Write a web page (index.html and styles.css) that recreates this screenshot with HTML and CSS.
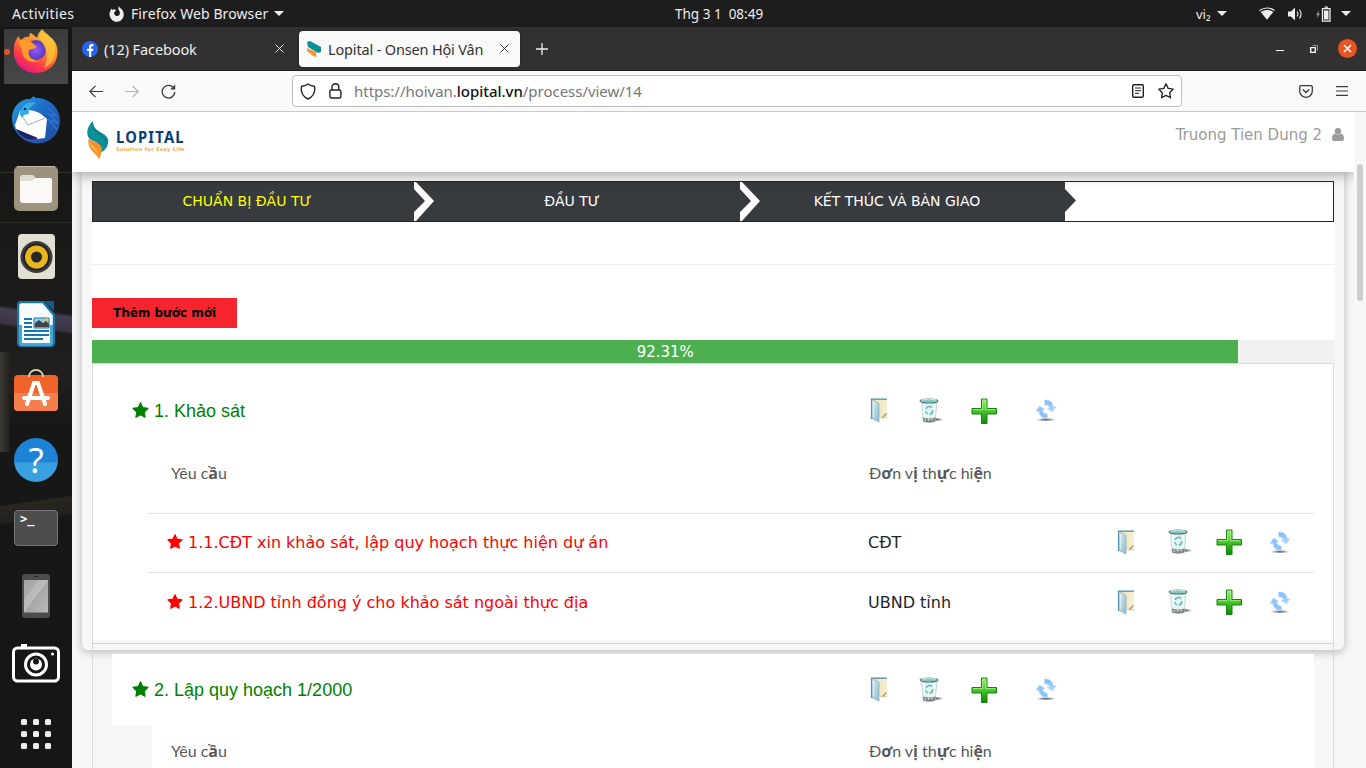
FILE: index.html
```html
<!DOCTYPE html>
<html lang="vi">
<head>
<meta charset="utf-8">
<title>Lopital - Onsen Hội Vân</title>
<link rel="stylesheet" href="styles.css">
</head>
<body>
<svg class="sprite" width="0" height="0" aria-hidden="true">
  <defs>
    <linearGradient id="gGreen" x1="0" y1="0" x2="0" y2="1"><stop offset="0" stop-color="#9be86c"/><stop offset=".45" stop-color="#4cc92e"/><stop offset="1" stop-color="#0b8a06"/></linearGradient>
    <linearGradient id="gDoor" x1="0" y1="0" x2="1" y2="1"><stop offset="0" stop-color="#dcecf0"/><stop offset="1" stop-color="#8fbccd"/></linearGradient>
    <linearGradient id="gPaper" x1="0" y1="0" x2="1" y2="0"><stop offset="0" stop-color="#e9dfae"/><stop offset="1" stop-color="#f6f0d4"/></linearGradient>
    <linearGradient id="gArrow" x1="0" y1="0" x2="0" y2="1"><stop offset="0" stop-color="#7db9f8"/><stop offset="1" stop-color="#b4dafd"/></linearGradient>
    <linearGradient id="gFox" x1=".9" y1="0" x2=".3" y2="1"><stop offset="0" stop-color="#f4d33c"/><stop offset=".45" stop-color="#ff8a28"/><stop offset=".75" stop-color="#ff3b46"/><stop offset="1" stop-color="#e31587"/></linearGradient>
    <linearGradient id="gBird" x1="0" y1="0" x2="1" y2="1"><stop offset="0" stop-color="#2aa3e4"/><stop offset=".5" stop-color="#1c67c0"/><stop offset="1" stop-color="#25479e"/></linearGradient>
    <radialGradient id="gGlobe"><stop offset="0" stop-color="#9059ff"/><stop offset="1" stop-color="#5b3ab8"/></radialGradient>
    <linearGradient id="gScreen" x1="0" y1="0" x2="1" y2="1"><stop offset="0" stop-color="#a4a4a4"/><stop offset=".3" stop-color="#acacac"/><stop offset=".31" stop-color="#b8b8b8"/><stop offset=".5" stop-color="#bcbcbc"/><stop offset=".51" stop-color="#a6a6a6"/><stop offset="1" stop-color="#bbb"/></linearGradient>
    <radialGradient id="gShade"><stop offset="0" stop-color="#555"/><stop offset=".5" stop-color="#888" stop-opacity=".7"/><stop offset="1" stop-color="#bbb" stop-opacity="0"/></radialGradient>
  </defs>
  <symbol id="star" viewBox="0 0 17 16"><path d="M8.500.8l2.200 4.700 5.300.8-3.800 3.700.9 5.200-4.600-2.500-4.600 2.500.9-5.200L1 6.300l5.300-.8z" stroke="currentColor" stroke-width="1.200" stroke-linejoin="round"/></symbol>
  <symbol id="folder" viewBox="0 0 18 25">
    <path d="M2 1h15v18.500H4z" fill="url(#gPaper)"/><path d="M1.500 21V1.200H17" fill="none" stroke="#4a86a8" stroke-width="1.200"/>
    <path d="M2 1.500l7 4V24l-7-3.500z" fill="url(#gDoor)" stroke="#7fadc0" stroke-width=".7"/><path d="M3.500 4v15" stroke="#f0f8fa" stroke-width="1.200" opacity=".7"/>
    <path d="M10 19.800h7" stroke="#cfc08e" stroke-width=".8"/><path d="M12.500 19.500l4-4" stroke="#b3945a" stroke-width="1.300"/>
  </symbol>
  <symbol id="trash" viewBox="0 0 25 26">
    <ellipse cx="17" cy="21.500" rx="8" ry="2.200" fill="url(#gShade)"/>
    <path d="M2.500 3h15.500l-1.800 20.500q-6 2-12 0z" fill="#e4f5f4" stroke="#b9cccc" stroke-width=".8"/>
    <path d="M4 19.500q6 2 12.700 0l-.5 4q-6 2-12 0z" fill="#808484"/><path d="M5.500 21.500l1.500 1m2-1.500l1.500 1.500m2-1.500l1.500 1" stroke="#e4e4e4" stroke-width="1.200"/>
    <ellipse cx="10" cy="3" rx="9" ry="2" fill="#7dcdc8" stroke="#626c6e" stroke-width="1.100"/><path d="M3 2q7-1.800 14 0" stroke="#d7eeee" fill="none"/>
    <path d="M7 11a3.600 3.600 0 0 1 6-1.500M13.600 12a3.800 3.800 0 0 1-2.800 4.200M9 16a3.800 3.800 0 0 1-2.300-3" fill="none" stroke="#6cc4bd" stroke-width="1.800"/><path d="M5 6v12M15.500 6v12" stroke="#fff" stroke-width="1.200"/>
  </symbol>
  <symbol id="plus" viewBox="0 0 26 26"><path d="M10.500 1h5.500v9.500h9.500V16H16v9.500h-5.500V16H1v-5.500h9.500z" fill="url(#gGreen)" stroke="#17840f"/><path d="M11.700 2.200h3v9.500h9.500M2.200 11.700h9.500V3" fill="none" stroke="#b6f39a" stroke-width=".8"/></symbol>
  <symbol id="refresh" viewBox="0 0 22 25">
    <ellipse cx="11" cy="21.700" rx="10.500" ry="1.900" fill="url(#gShade)"/>
    <path d="M9.500 2Q17 1 18.500 9l2.500-.5-3.500 5.500-5.500-3.500 2.500-.7Q13.500 6.500 9.500 7z" fill="url(#gArrow)" stroke="#c3e0fc" stroke-width=".7"/>
    <path d="M12.500 20.500Q5 21 3.500 13L.8 13.500l3.700-5.500L10 11.500l-2.500.6q1 3.900 5 4.200z" fill="#8cc3fa" stroke="#c3e0fc" stroke-width=".7"/>
  </symbol>
  <symbol id="leaf" viewBox="0 0 22 40"><path d="M6 1C-1 7-2 17 5 20.500c7 2.500 10 6 9 12C19 30 22 25 21 19 19 12 5 12 6 1z" fill="#0d8f98"/><path d="M6 1c-1 13 14 13 13.500 23C18 14 3 14 6 1z" fill="#096f80"/><path d="M1.500 18.500c4 4 11 3 13 9 1 4-1 8-2.500 12C10 33 0 31 1.500 18.500z" fill="#f7902d"/><path d="M2 20c3 7 11 9 10 19 1-6-6-9-8-12z" fill="#fbb73e"/></symbol>
</svg>

<header class="topbar">
  <span class="activities">Activities</span>
  <svg class="fxmini" width="16" height="16" viewBox="0 0 16 16"><path d="M2.500 2.500l1 1.500C5 3 6 3.200 7 4.500L5.500 6c-1 1.500 0 4 2.500 4s4-3 2-5.500C9 3 9.200 1.500 10 0c.3 1.500 1.200 2 2.200 2.700L13 3.500C17 9 13.500 15.800 8 15.800S-1.500 9 1.500 4.500z" fill="#eee"/></svg>
  <span class="appname">Firefox Web Browser</span>
  <i class="caret"></i>
  <span class="clock">Thg 3 1&nbsp; 08:49</span>
  <span class="lang">vi₂</span><i class="caret"></i>
  <svg class="wifi" width="16" height="13" viewBox="0 0 16 13"><path d="M.5 3.500Q8-1.500 15.500 3.500" fill="none" stroke="#eee" stroke-width="1.200"/><path d="M1.700 5Q8 1.200 14.300 5L8 12.700z" fill="#eee"/></svg>
  <svg class="vol" width="16" height="14" viewBox="0 0 16 14"><path d="M0 4.500h3L7 .5v13l-4-4H0z" fill="#eee"/><path d="M9 4.500q2 2.500 0 5M11.300 2.500q3.500 4.500 0 9" fill="none" stroke="#ddd" stroke-width="1.200"/></svg>
  <svg class="bat" width="15" height="16" viewBox="0 0 15 16"><path d="M3 4L0 9h1.700L1 12.500 4 7.500H2.300z" fill="#999"/><path d="M6.500 2.700h7.500v12.500H6.500zM8.500 1.200h3.500" fill="none" stroke="#eee" stroke-width="1.300"/><path d="M8 4.500h4.500v9H8z" fill="#eee"/></svg>
  <i class="caret"></i>
</header>

<div class="desktop">
  <nav class="dock">
    <div class="app active"><svg width="48" height="48" viewBox="0 0 48 48"><path d="M6 9l3 4c3-3 6-4 8-3l1-4c4 1 4 4 9 5 0-4 2-6 3-8 2 4 13 7 15 17 3 14-7 26-21 26S0 35 2 21C2 15 5 12 6 9z" fill="url(#gFox)"/><circle cx="24" cy="23" r="10" fill="url(#gGlobe)"/><path d="M6 15c6-5 13-1 18 4 2 2-4 3-7 4-2 7 4 11 10 11-10 4-18-4-17-12z" fill="#ff9a2c"/><path d="M25 10c1-4 3-6 5-8 4 5 14 9 13 23-1 9-5 13-11 16 5-9 4-22-7-31z" fill="#fcc53a" opacity=".75"/></svg></div>
    <div class="app"><svg width="48" height="48" viewBox="0 0 48 48"><path d="M0 22C0 10 10 2 18 3l4-3c0 2 2 2 5 2 14 2 21 12 21 23 0 10-6 19-17 22C15 50 0 38 0 22z" fill="url(#gBird)"/><path d="M3 29l5-14q11-3 21 3l6 5-2 19-8 1L4 33z" fill="#fff"/><path d="M8 17l8 12 17-7" fill="none" stroke="#aaa"/><path d="M4 33l22 9c-8 4-17 0-22-9z" fill="#251e69"/><path d="M8 19c0-9 7-14 16-12-6 3-8 7-7 11l-5 1-2 3z" fill="#38adea"/><circle cx="13" cy="13" r="1.300" fill="#162640"/><path d="M36 12l9 8-8-2 9 9-9-3 8 10" fill="none" stroke="#2d74cc" stroke-width="1.500"/></svg></div>
    <div class="app"><svg width="44" height="45" viewBox="0 0 44 45"><rect width="44" height="45" rx="5" fill="#9c927e"/><path d="M3 .5h38" stroke="#c4bba9"/><path d="M6 13V11q0-2 2-2h11l3 3h15v6H6z" fill="#dfdbd0"/><path d="M6 15h12l4-3h14q2 0 2 2v20q0 3-3 3H9q-3 0-3-3z" fill="#faf9f7"/></svg></div>
    <div class="app"><svg width="37" height="45" viewBox="0 0 37 45"><rect width="37" height="45" rx="4" fill="#e3dfd3"/><circle cx="18.500" cy="23" r="16" fill="#3d3b3f"/><circle cx="18.500" cy="23" r="13.500" fill="#222"/><circle cx="18.500" cy="23" r="11.500" fill="#e7b71d"/><circle cx="18.500" cy="23" r="5.500" fill="#25282a"/></svg></div>
    <div class="app"><svg width="38" height="46" viewBox="0 0 38 46"><path d="M4 1h22l11 13v27q0 4-4 4H5q-4 0-4-4V5q0-4 3-4z" fill="#f8fbfd" stroke="#1877aa" stroke-width="2.500"/><path d="M2 24h3v18h28V24h3v17q0 4-4 4H5q-3 0-3-4z" fill="#4aa6cf"/><path d="M27 0h10v10z" fill="#145c89"/><path d="M7 18h8M7 22h8M7 26h8M7 30h25M7 34h25M7 38h19" stroke="#1877aa" stroke-width="2"/><path d="M17 17h15v10H17z" fill="#8ed0ef" stroke="#1877aa"/><path d="M18 26v-4l4-3 4 3 3-2 3 3v3z" fill="#444"/><circle cx="30" cy="18.500" r="1.500" fill="#f5c52a"/></svg></div>
    <div class="app store"><svg width="44" height="42" viewBox="0 0 44 42"><rect y="6" width="44" height="36" rx="4" fill="#f06329"/><path d="M0 24h44v14q0 4-4 4H4q-4 0-4-4z" fill="#f47e4c"/><path d="M15 8c0-9.500 14-9.500 14 0" fill="none" stroke="#e8d8b0" stroke-width="1.600"/><path d="M13 35l7-21h4l7 21M10 29h24" stroke="#fff" stroke-width="4" fill="none" stroke-linecap="round"/></svg></div>
    <div class="app"><div class="help">?</div></div>
    <div class="app"><div class="term">&gt;_</div></div>
    <div class="app"><svg width="28" height="44" viewBox="0 0 28 44"><rect width="28" height="44" rx="3" fill="#4c4c4c"/><rect x="2" y="6" width="24" height="32.500" fill="url(#gScreen)"/><path d="M12 2.500h4" stroke="#222"/></svg></div>
    <div class="app camera"><svg width="48" height="40" viewBox="0 0 48 40"><rect x="1.500" y="5" width="45" height="33" rx="4" fill="none" stroke="#fff" stroke-width="3"/><path d="M9 1h6v4H9z" fill="#fff"/><circle cx="24" cy="21.500" r="10.500" fill="none" stroke="#fff" stroke-width="3"/><circle cx="24" cy="21.500" r="6" fill="#fff"/><circle cx="24" cy="18.500" r="3" fill="#161616"/><circle cx="40.500" cy="11" r="1.500" fill="#fff"/></svg></div>
    <div class="app grid"><i></i><i></i><i></i><i></i><i></i><i></i><i></i><i></i><i></i></div>
  </nav>

  <main class="window">
    <div class="tabs">
      <div class="tab"><svg width="16" height="16" viewBox="0 0 16 16"><circle cx="8" cy="8" r="8" fill="#2465f1"/><path d="M7 16v-6H5V7.700h2V6.200Q7 3 10 3h1.400v2.200h-1.200q-1 0-1 1v1.500h2.200L11 10H9.200v6z" fill="#fff"/></svg><span class="t1">(12) Facebook</span><svg class="x" width="9" height="9" viewBox="0 0 9 9"><path d="M.5.5l8 8m0-8l-8 8" stroke="#ddd"/></svg></div>
      <div class="tab on"><svg width="16" height="16" viewBox="0 0 16 16"><path d="M1 1l3-1 11 6v5l-3 1L2 6z" fill="#0b8f98"/><path d="M1 7l9 4 .500 5L7 15l-6-5z" fill="#f7992d"/></svg><span class="t2">Lopital - Onsen Hội Vân</span><svg class="x" width="9" height="9" viewBox="0 0 9 9"><path d="M.5.5l8 8m0-8l-8 8" stroke="#444"/></svg></div>
      <svg class="newtab" width="12" height="12" viewBox="0 0 12 12"><path d="M6 0v12M0 6h12" stroke="#eee" stroke-width="1.300"/></svg>
      <div class="controls"><i class="min"></i><svg width="8" height="8" viewBox="0 0 8 8"><path d="M.7 2.700h4.600v4.600H.7z" stroke="#fff" stroke-width="1.300" fill="none"/><path d="M2.500.5h5v5" stroke="#999" fill="none"/></svg><svg width="19" height="19" viewBox="0 0 19 19"><circle cx="9.500" cy="9.500" r="9.500" fill="#e95420"/><path d="M6 6l7 7m0-7l-7 7" stroke="#fff" stroke-width="1.500"/></svg></div>
    </div>
    <div class="toolbar">
      <svg width="15" height="13" viewBox="0 0 15 13"><path d="M14 6.500H1M6.500.9L.8 6.500l5.700 5.600" fill="none" stroke="#3a3a3f" stroke-width="1.200"/></svg>
      <svg class="fwd" width="15" height="13" viewBox="0 0 15 13"><path d="M0 6.500h13M7.500.9l5.700 5.600-5.700 5.600" fill="none" stroke="#b1b1b3" stroke-width="1.200"/></svg>
      <svg class="reload" width="15" height="15" viewBox="0 0 15 15"><path d="M12 3.300A6.300 6.300 0 1 0 13.800 8" fill="none" stroke="#3a3a3f" stroke-width="1.300"/><path d="M14.200.5v5H9.200z" fill="#3a3a3f"/></svg>
      <div class="urlbar">
        <svg width="16" height="17" viewBox="0 0 16 17"><path d="M8 1q3 2.200 6.500 2.300Q16 12 8 16 0 12 1.500 3.300 5 3.200 8 1z" fill="none" stroke="#222" stroke-width="1.400" stroke-linejoin="round"/></svg>
        <svg class="lock" width="13" height="16" viewBox="0 0 13 16"><rect x=".9" y="7" width="11" height="8" rx="1.500" fill="none" stroke="#222" stroke-width="1.400"/><path d="M3 7V4.200a3.400 3.400 0 0 1 6.800 0V7" fill="none" stroke="#222" stroke-width="1.400"/></svg>
        <span class="url">https://hoivan.<b>lopital.vn</b>/process/view/14</span>
        <svg class="reader" width="12" height="14" viewBox="0 0 12 14"><rect x=".7" y=".7" width="10.600" height="12.600" rx="1.300" fill="none" stroke="#222" stroke-width="1.400"/><path d="M3 4h6M3 6.700h6M3 9.300h4" stroke="#222"/></svg>
        <svg class="fav" width="16" height="16" viewBox="0 0 16 16"><path d="M8 .8l2.200 4.600 5 .8-3.600 3.500.9 5.100L8 12.400l-4.500 2.400.9-5.100L.8 6.200l5-.8z" fill="none" stroke="#222" stroke-width="1.300" stroke-linejoin="round"/></svg>
      </div>
      <svg class="pocket" width="14" height="13" viewBox="0 0 14 13"><path d="M2 .7h10q1.300 0 1.300 1.300v4a6.300 6.300 0 0 1-12.600 0V2Q.7.700 2 .7z" fill="none" stroke="#3a3a3f" stroke-width="1.300"/><path d="M3.800 4.500L7 7.500l3.200-3" fill="none" stroke="#3a3a3f" stroke-width="1.400"/></svg>
      <svg class="menu" width="12" height="10" viewBox="0 0 12 10"><path d="M0 .6h12M0 5h12M0 9.400h12" stroke="#3a3a3f" stroke-width="1.200"/></svg>
    </div>

    <div class="viewport">
      <div class="page">
        <header class="site">
          <svg class="logo" width="22" height="40"><use href="#leaf"/></svg>
          <div class="brand"><strong>LOPITAL</strong><small>Solution for Esay Life</small></div>
          <span class="user">Truong Tien Dung 2</span>
          <svg class="person" width="12" height="13" viewBox="0 0 12 13"><circle cx="6" cy="3.300" r="3.200" fill="#9b9b9b"/><path d="M0 11q0-5 3-5.200 3 2 6 0Q12 6 12 11q0 2-2 2H2q-2 0-2-2z" fill="#9b9b9b"/></svg>
        </header>
        <section class="card">
          <div class="steps"><div class="step s1">CHUẨN BỊ ĐẦU TƯ</div><div class="step s2">ĐẦU TƯ</div><div class="step s3">KẾT THÚC VÀ BÀN GIAO</div></div>
          <div class="actions"><button>Thêm bước mới</button></div>
          <div class="progress"><div class="bar" style="width:92.31%">92.31%</div></div>
          <div class="group first">
            <div class="head"><svg class="star" width="17" height="16"><use href="#star"/></svg><h4>1. Khảo sát</h4>
              <span class="ops"><svg width="18" height="25"><use href="#folder"/></svg><svg width="25" height="26"><use href="#trash"/></svg><svg width="26" height="26"><use href="#plus"/></svg><svg width="22" height="25"><use href="#refresh"/></svg></span></div>
            <div class="cols"><span>Yêu c<b>ầ</b>u</span><span>Đ<b>ơ</b>n v<b>ị</b> th<b>ự</b>c hi<b>ệ</b>n</span></div>
            <div class="row"><span class="task"><svg class="star" width="16" height="15"><use href="#star"/></svg>1.1.CĐT xin khảo sát, lập quy hoạch thực hiện dự án</span><span class="unit">CĐT</span>
              <span class="ops"><svg width="18" height="25"><use href="#folder"/></svg><svg width="25" height="26"><use href="#trash"/></svg><svg width="26" height="26"><use href="#plus"/></svg><svg width="22" height="25"><use href="#refresh"/></svg></span></div>
            <div class="row"><span class="task"><svg class="star" width="16" height="15"><use href="#star"/></svg>1.2.UBND tỉnh đồng ý cho khảo sát ngoài thực địa</span><span class="unit">UBND tỉnh</span>
              <span class="ops"><svg width="18" height="25"><use href="#folder"/></svg><svg width="25" height="26"><use href="#trash"/></svg><svg width="26" height="26"><use href="#plus"/></svg><svg width="22" height="25"><use href="#refresh"/></svg></span></div>
          </div>
          <div class="rule"></div>
          <div class="group next">
            <div class="head"><svg class="star" width="17" height="16"><use href="#star"/></svg><h4>2. Lập quy hoạch 1/2000</h4>
              <span class="ops"><svg width="18" height="25"><use href="#folder"/></svg><svg width="25" height="26"><use href="#trash"/></svg><svg width="26" height="26"><use href="#plus"/></svg><svg width="22" height="25"><use href="#refresh"/></svg></span></div>
            <div class="cols"><span>Yêu c<b>ầ</b>u</span><span>Đ<b>ơ</b>n v<b>ị</b> th<b>ự</b>c hi<b>ệ</b>n</span></div>
          </div>
        </section>
      </div>
      <div class="scroll"><i></i></div>
    </div>
  </main>
</div>
</body>
</html>
```
FILE: styles.css
```css
* { box-sizing: border-box; }
body { margin: 0; width: 1366px; height: 768px; overflow: hidden; display: flex; flex-direction: column; font-family: "DejaVu Sans", sans-serif; background: #1d1d1d; }
svg { display: block; flex: none; }
.sprite { position: absolute; }

.topbar { height: 27px; flex: none; background: #1d1d1d; color: #eee; display: flex; align-items: center; font: 14px "Noto Sans", sans-serif; padding: 0 15px 0 12px; white-space: nowrap; }
.activities { width: 97px; letter-spacing: 0.4px; }
.appname { width: 137px; margin-left: 6px; letter-spacing: 0.1px; }
.caret { width: 10px; height: 5px; background: #eee; clip-path: polygon(0 0, 100% 0, 50% 100%); flex: none; margin-left: 6px; }
.clock { width: 90px; margin-left: 391px; font-size: 13.500px; }
.lang { margin-left: 431px; width: 16px; font-size: 13px; }
.lang + .caret { margin-left: 5px; }
.wifi { margin-left: 32px; }
.vol { margin-left: 13px; }
.bat { margin-left: 12px; }
.bat + .caret { margin-left: 10px; }

.desktop { display: flex; flex: 1; min-height: 0; }
.dock { width: 72px; flex: none; background:
  linear-gradient(90deg, #3a3932, #24231f 9px, transparent 10px) 0 325px / 72px 100px no-repeat,
  linear-gradient(187deg, transparent 46%, #453e52 52%, #3a3444 72%, transparent 76%) 0 255px / 72px 60px no-repeat,
  linear-gradient(172deg, transparent 30%, #292620 33%, #23211d 60%, transparent 65%) 0 460px / 72px 50px no-repeat,
  linear-gradient(#33302a, #33302a) 0 145px / 72px 1px no-repeat,
  linear-gradient(#33302a, #33302a) 0 195px / 72px 1px no-repeat,
  linear-gradient(#151515 0, #171716 20%, #1c1b1a 36%, #22201e 48%, #1c1b1a 50%, #171717 54%, #161615 100%); }
.app { height: 68px; display: flex; align-items: center; justify-content: center; }
.app.active { height: 59px; position: relative; padding-bottom: 11px; background: linear-gradient(#3a3a3a, #484848) 4px 2px / 64px 55px no-repeat; }
.app.active::before { content: ""; position: absolute; left: 4px; top: 22px; width: 6px; height: 6px; border-radius: 50%; background: #e95420; }
.store { padding-bottom: 5px; }
.camera { padding-bottom: 3px; }
.help { width: 44px; height: 44px; border-radius: 50%; background: linear-gradient(#1c83d6 55%, #389fe0 56%); color: #fff; font: 35px/44px "Noto Sans", sans-serif; text-align: center; }
.term { width: 44px; height: 36px; border-radius: 4px; border: 1px solid #777; background: #4d4d4d; color: #fff; font: bold 12px/14px "DejaVu Sans Mono", monospace; padding: 1px 5px; }
.app.grid { height: 70px; display: grid; grid-template-columns: repeat(3, 6px); gap: 6px; align-content: center; padding-top: 2px; }
.app.grid i { width: 6px; height: 6px; border-radius: 1.500px; background: #eee; }

.window { flex: 1; min-width: 0; display: flex; flex-direction: column; }
.tabs { height: 44px; flex: none; background: #333031; border-bottom: 1px solid #1e1c1d; display: flex; align-items: center; font: 14.500px "Noto Sans", sans-serif; color: #eee; white-space: nowrap; }
.tab { width: 227px; height: 36px; display: flex; align-items: center; padding: 0 15px 0 10px; }
.tab span { margin-left: 6px; flex: 1; }
.tab.on { width: 221px; background: #f9f9fa; color: #333; border-radius: 4px; padding: 0 11px 0 7px; box-shadow: 0 0 3px #0006; }
.t1 { letter-spacing: -0.1px; }
.t2 { letter-spacing: -0.16px; }
.newtab { margin-left: 16px; }
.controls { margin-left: auto; display: flex; align-items: center; padding-right: 9px; }
.min { width: 8px; height: 1px; background: #fff; margin: 4px 26px 0 0; }
.controls svg:last-child { margin-left: 20px; }
.toolbar { height: 41px; flex: none; background: #f9f9fa; border-bottom: 1px solid #c9c9ca; display: flex; align-items: center; padding: 0 17px; }
.fwd { margin-left: 21px; }
.reload { margin-left: 21px; }
.urlbar { margin-left: 116px; width: 890px; height: 32px; border: 1px solid #bdbdbf; border-radius: 4px; background: #fff; display: flex; align-items: center; padding: 0 7px; }
.lock { margin-left: 13px; }
.url { margin-left: 12px; flex: 1; font: 15px "Noto Sans", sans-serif; color: #777; letter-spacing: -0.03px; }
.url b { font-weight: 500; color: #111; }
.fav { margin-left: 14px; }
.pocket { margin-left: 117px; }
.menu { margin-left: 23px; }

.viewport { flex: 1; min-height: 0; display: flex; background: #f7f7f7; overflow: hidden; }
.page { width: 1282px; flex: none; }
.site { position: relative; z-index: 2; height: 60px; background: #fff; box-shadow: 0 3px 12px #0005; clip-path: inset(0 0 -20px 0); display: flex; align-items: center; padding: 0 10px 4px 15px; }
.brand { margin: 2px 0 0 7px; display: flex; flex-direction: column; width: 90px; color: #0b3c74; white-space: nowrap; }
.brand strong { font: bold 16px/17px "Noto Sans", sans-serif; letter-spacing: 1.300px; transform: scaleX(.92); transform-origin: 0 0; }
.brand small { font: bold 5px/7px "DejaVu Sans", sans-serif; letter-spacing: .4px; color: #f5a94a; }
.user { margin-left: auto; padding-bottom: 11px; font-size: 15px; color: #9b9b9b; white-space: nowrap; }
.person { margin: 0 0 11px 10px; }
.card { margin: 0 10px; height: 478px; padding: 9px 10px; border-radius: 0 0 6px 6px; background: linear-gradient(#fff, #fff) 10px 9px / 1242px 459px no-repeat #f7f7f7; box-shadow: 0 2px 10px #0004; }
.steps { height: 41px; border: 1px solid #222428; display: flex; background: #fff; font-size: 14px; color: #fff; }
.step { position: relative; width: 325px; background: #373a3f; display: flex; align-items: center; justify-content: center; padding-right: 11px; padding-bottom: 2px; }
.s1 { width: 321px; padding-right: 13px; color: #ff0; }
.s2 { padding-left: 2px; width: 326px; padding-right: 12px; }
.step + .step::before { content: ""; position: absolute; left: 0; top: 0; width: 20px; height: 39px; background: #fff; clip-path: polygon(0 0, 2px 0, 20px 19px, 2px 39px, 0 39px, 0 30px, 11px 19px, 0 7px); }
.s3::after { content: ""; position: absolute; left: 100%; top: 7px; width: 11px; height: 23px; background: #373a3f; clip-path: polygon(0 0, 100% 50%, 0 100%); }
.actions { margin-top: 42px; border-top: 1px solid #eee; padding-top: 33px; height: 76px; }
button { width: 145px; height: 30px; border: 0; padding: 0; background: #f6252d; color: #000; font: bold 12px "DejaVu Sans", sans-serif; display: block; }
.progress { height: 23px; background: #f1f1f1; }
.bar { height: 23px; background: #4caf50; color: #fff; font-size: 15px; line-height: 24px; text-align: center; }
.group { border: solid #d9dadb; border-width: 0 1px; padding: 0 19px; }
.first { height: 277px; background: #fff; border-top-width: 1px; padding-top: 11px; }
.rule { height: 14px; border: solid #d5d6d7; border-width: 0 1px; background: linear-gradient(#d5d6d7, #d5d6d7) 0 3px / 100% 1px no-repeat; }
.next { height: 130px; }
.head { height: 71px; background: #fff; display: flex; align-items: center; padding-left: 20px; color: #008000; }
.star { fill: currentColor; }
.head .star { margin-bottom: 1px; }
h4 { margin: 2px 0 0 5px; width: 716px; font: 18px "Liberation Sans", sans-serif; }
.ops { display: flex; align-items: center; }
.ops svg:nth-child(2) { margin-left: 31px; }
.ops svg:nth-child(3) { margin-left: 27px; }
.ops svg:nth-child(4) { margin-left: 38px; }
.cols { height: 67px; margin-left: 40px; padding: 17px 0 0 19px; background: #fff; display: flex; font: 16px/19px "Lato", sans-serif; color: #58585b; white-space: nowrap; }
.next .cols { padding-top: 16px; }
.cols span:first-child { width: 698px; }
.cols b { font-family: "Open Sans", sans-serif; font-size: 16px; line-height: 19px; }
.row { margin-left: 36px; height: 59px; border-top: 1px solid #dee2e6; display: flex; align-items: center; padding: 0 0 2px 19px; font-size: 16px; color: #212529; white-space: nowrap; }
.row + .row { height: 60px; padding-bottom: 1px; }
.task { width: 701px; display: flex; align-items: center; color: #f00; }
.task svg { margin: 0 5px 1px 0; }
.unit { width: 249px; }
.row .ops svg:nth-child(2) { margin-left: 33px; }
.row .ops svg:nth-child(3) { margin-left: 23px; }
.row .ops svg:nth-child(4) { margin-left: 27px; }
.scroll { width: 12px; padding: 52px 0 0 3px; }
.scroll i { display: block; width: 6px; height: 137px; border-radius: 3px; background: #cdcdcd; }
```
